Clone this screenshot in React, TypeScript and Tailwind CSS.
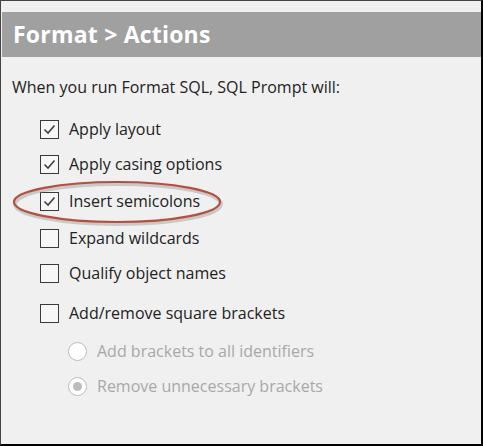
import React from "react";

const font = { fontFamily: '"Open Sans", "DejaVu Sans", sans-serif' };

const Check = ({ checked }: { checked: boolean }) => (
  <span className="w-[19px] h-[19px] border border-[#3a3a3a] bg-[#f7f7f7] flex items-center justify-center shrink-0">
    {checked && (
      <svg width="15" height="15" viewBox="0 0 15 15">
        <path d="M2.5 7.5 L6 11 L12.5 3.5" fill="none" stroke="#404040" strokeWidth="1.6" />
      </svg>
    )}
  </span>
);

const Radio = ({ selected }: { selected: boolean }) => (
  <span className="w-[19px] h-[19px] rounded-full border border-[#bdbdbd] bg-white flex items-center justify-center shrink-0">
    {selected && <span className="w-[9px] h-[9px] rounded-full bg-[#bdbdbd]" />}
  </span>
);

const options = [
  { label: "Apply layout", checked: true, mt: "mt-0" },
  { label: "Apply casing options", checked: true, mt: "mt-[11px]" },
  { label: "Insert semicolons", checked: true, mt: "mt-[13px]" },
  { label: "Expand wildcards", checked: false, mt: "mt-[13px]" },
  { label: "Qualify object names", checked: false, mt: "mt-[11px]" },
  { label: "Add/remove square brackets", checked: false, mt: "mt-[16px]" },
];

export default function App() {
  return (
    <div
      className="w-[483px] h-[446px] bg-[#f0f0f0] border-t border-l border-[#444] border-r-2 border-b-2 border-r-black border-b-black relative overflow-hidden"
      style={font}
    >
      <div className="mt-[11px] ml-[1px] h-[45px] bg-[#a0a0a0] flex items-center pl-[11px]">
        <span className="text-white font-bold text-[23px] tracking-[0.2px]">Format &gt; Actions</span>
      </div>
      <div className="pl-[11px] pt-[19px] text-[16px] text-[#222] leading-[22px]">
        When you run Format SQL, SQL Prompt will:
      </div>
      <div className="pl-[39px] pt-[19px] flex flex-col text-[16px] text-[#222]">
        {options.map((o) => (
          <div key={o.label} className={`${o.mt} h-[24px] flex items-center gap-[10px]`}>
            <Check checked={o.checked} />
            <span>{o.label}</span>
          </div>
        ))}
      </div>
      <div className="pl-[67px] flex flex-col text-[16px] text-[#a8a8a8]">
        <div className="mt-[14px] h-[24px] flex items-center gap-[10px]">
          <Radio selected={false} />
          <span>Add brackets to all identifiers</span>
        </div>
        <div className="mt-[11px] h-[24px] flex items-center gap-[10px]">
          <Radio selected={true} />
          <span>Remove unnecessary brackets</span>
        </div>
      </div>
      {/* highlight ring around "Insert semicolons" */}
      <svg className="absolute left-[10px] top-[177px]" width="220" height="50" viewBox="0 0 220 50">
        <ellipse cx="107" cy="26" rx="103" ry="20" fill="none" stroke="#999" strokeOpacity="0.45" strokeWidth="4" />
        <ellipse cx="106" cy="24" rx="103" ry="20" fill="none" stroke="#b5503c" strokeWidth="2.2" />
      </svg>
    </div>
  );
}
